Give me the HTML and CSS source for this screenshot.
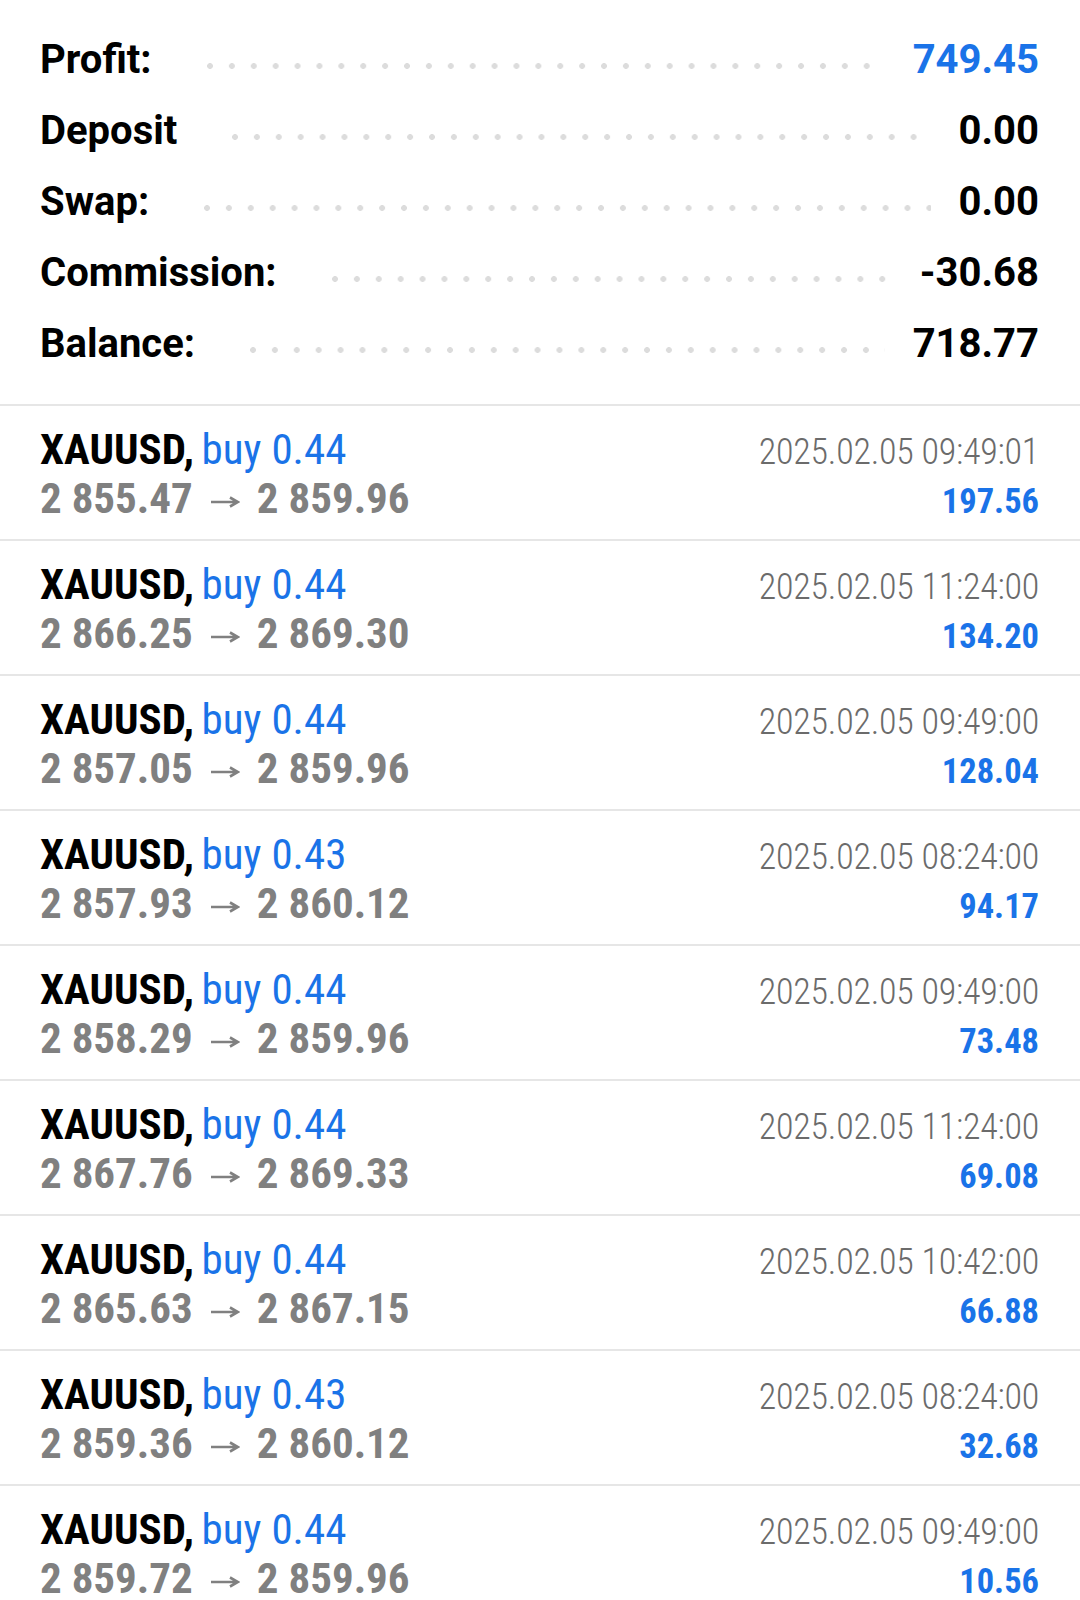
FILE: index.html
```html
<!DOCTYPE html>
<html lang="en">
<head>
  <meta charset="UTF-8" />
  <meta name="viewport" content="width=device-width, initial-scale=1.0"/>
  <title>History</title>
  <link rel="stylesheet" href="styles.css">
</head>
<body>
  <div id="summary">
    <div class="sum-row"><span class="sum-label">Profit:</span><span class="dots"></span><span class="sum-value blue">749.45</span></div>
    <div class="sum-row"><span class="sum-label">Deposit</span><span class="dots"></span><span class="sum-value">0.00</span></div>
    <div class="sum-row"><span class="sum-label">Swap:</span><span class="dots"></span><span class="sum-value">0.00</span></div>
    <div class="sum-row"><span class="sum-label">Commission:</span><span class="dots"></span><span class="sum-value">-30.68</span></div>
    <div class="sum-row"><span class="sum-label">Balance:</span><span class="dots"></span><span class="sum-value">718.77</span></div>
  </div>

  <div id="deals">
    <div class="deal">
      <div class="line"><span><b class="sym">XAUUSD,</b> <span class="side">buy 0.44</span></span><span class="time">2025.02.05 09:49:01</span></div>
      <div class="line"><span class="prices">2 855.47<svg class="arrow" viewBox="0 0 30 12"><path d="M1 6H26M20 1.5L28 6L20 10.5"/></svg>2 859.96</span><span class="pl">197.56</span></div>
    </div>
    <div class="deal">
      <div class="line"><span><b class="sym">XAUUSD,</b> <span class="side">buy 0.44</span></span><span class="time">2025.02.05 11:24:00</span></div>
      <div class="line"><span class="prices">2 866.25<svg class="arrow" viewBox="0 0 30 12"><path d="M1 6H26M20 1.5L28 6L20 10.5"/></svg>2 869.30</span><span class="pl">134.20</span></div>
    </div>
    <div class="deal">
      <div class="line"><span><b class="sym">XAUUSD,</b> <span class="side">buy 0.44</span></span><span class="time">2025.02.05 09:49:00</span></div>
      <div class="line"><span class="prices">2 857.05<svg class="arrow" viewBox="0 0 30 12"><path d="M1 6H26M20 1.5L28 6L20 10.5"/></svg>2 859.96</span><span class="pl">128.04</span></div>
    </div>
    <div class="deal">
      <div class="line"><span><b class="sym">XAUUSD,</b> <span class="side">buy 0.43</span></span><span class="time">2025.02.05 08:24:00</span></div>
      <div class="line"><span class="prices">2 857.93<svg class="arrow" viewBox="0 0 30 12"><path d="M1 6H26M20 1.5L28 6L20 10.5"/></svg>2 860.12</span><span class="pl">94.17</span></div>
    </div>
    <div class="deal">
      <div class="line"><span><b class="sym">XAUUSD,</b> <span class="side">buy 0.44</span></span><span class="time">2025.02.05 09:49:00</span></div>
      <div class="line"><span class="prices">2 858.29<svg class="arrow" viewBox="0 0 30 12"><path d="M1 6H26M20 1.5L28 6L20 10.5"/></svg>2 859.96</span><span class="pl">73.48</span></div>
    </div>
    <div class="deal">
      <div class="line"><span><b class="sym">XAUUSD,</b> <span class="side">buy 0.44</span></span><span class="time">2025.02.05 11:24:00</span></div>
      <div class="line"><span class="prices">2 867.76<svg class="arrow" viewBox="0 0 30 12"><path d="M1 6H26M20 1.5L28 6L20 10.5"/></svg>2 869.33</span><span class="pl">69.08</span></div>
    </div>
    <div class="deal">
      <div class="line"><span><b class="sym">XAUUSD,</b> <span class="side">buy 0.44</span></span><span class="time">2025.02.05 10:42:00</span></div>
      <div class="line"><span class="prices">2 865.63<svg class="arrow" viewBox="0 0 30 12"><path d="M1 6H26M20 1.5L28 6L20 10.5"/></svg>2 867.15</span><span class="pl">66.88</span></div>
    </div>
    <div class="deal">
      <div class="line"><span><b class="sym">XAUUSD,</b> <span class="side">buy 0.43</span></span><span class="time">2025.02.05 08:24:00</span></div>
      <div class="line"><span class="prices">2 859.36<svg class="arrow" viewBox="0 0 30 12"><path d="M1 6H26M20 1.5L28 6L20 10.5"/></svg>2 860.12</span><span class="pl">32.68</span></div>
    </div>
    <div class="deal">
      <div class="line"><span><b class="sym">XAUUSD,</b> <span class="side">buy 0.44</span></span><span class="time">2025.02.05 09:49:00</span></div>
      <div class="line"><span class="prices">2 859.72<svg class="arrow" viewBox="0 0 30 12"><path d="M1 6H26M20 1.5L28 6L20 10.5"/></svg>2 859.96</span><span class="pl">10.56</span></div>
    </div>
  </div>
</body>
</html>
```

FILE: styles.css
```css
body {
  font-family: Roboto, "Noto Sans", sans-serif;
  background: #fff;
  color: #000;
  margin: 0;
  padding: 0;
  overflow: hidden;
}
#summary {
  padding: 24px 41px 25px 40px;
  border-bottom: 2px solid #e6e6e6;
}
.sum-row {
  display: flex;
  height: 71px;
  line-height: 71px;
  font-size: 40px;
  font-weight: 700;
}
.dots {
  flex: 1;
  margin: 0 28px 0 55px;
  background-image: radial-gradient(circle at 3px 3px, #dcdcdc 2.6px, transparent 3.2px);
  background-size: 21.9px 6px;
  background-position: 0 39px;
  background-repeat: repeat-x;
}
.blue {
  color: #1a73e8;
}
.deal {
  padding: 19px 41px 16px 40px;
  border-bottom: 2px solid #e6e6e6;
  font-family: "Roboto Condensed", "Liberation Sans Narrow", Roboto, sans-serif;
}
.line {
  display: flex;
  justify-content: space-between;
  align-items: baseline;
  height: 49px;
  line-height: 49px;
}
.sym {
  font-size: 43px;
  font-weight: 700;
  color: #000;
}
.side {
  font-size: 43px;
  color: #1a73e8;
  margin-left: 4px;
}
.prices {
  font-size: 43px;
  font-weight: 700;
  color: #808080;
}
.arrow {
  width: 30px;
  height: 12px;
  margin: 0 17px 0 17px;
  vertical-align: 5px;
  fill: none;
  stroke: #808080;
  stroke-width: 2.6;
}
.time {
  font-size: 36px;
  font-weight: 300;
  letter-spacing: -0.25px;
  color: #6b6b6b;
}
.pl {
  font-size: 34.5px;
  font-weight: 700;
  color: #1a73e8;
}
```
